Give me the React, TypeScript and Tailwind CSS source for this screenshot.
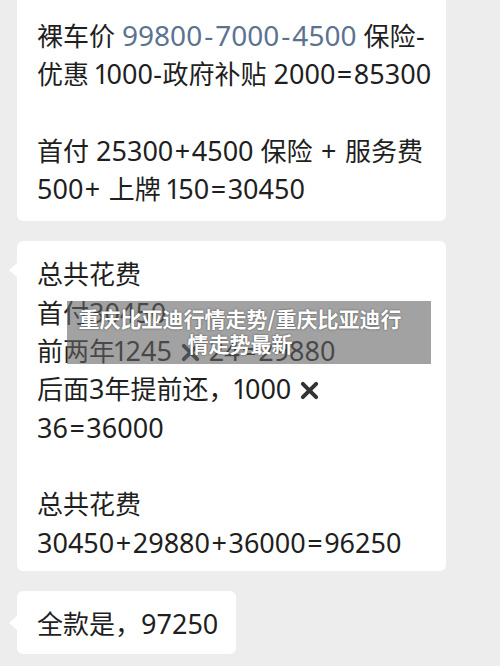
import React from "react";

const font = { fontFamily: '"Noto Sans CJK SC", "Noto Sans", sans-serif' };

// latin runs use Noto Sans digits, with a narrow "1" and roomier symbols like the phone font
function T({ children, wide }: { children: string; wide?: boolean }) {
  const parts = children.split(/([0-9+=\-]+| )/);
  return (
    <>
      {parts.map((p, i) => {
        if (p === " ") return <span key={i} className="inline-block w-[7px]" />;
        if (/^[0-9+=\-]+$/.test(p))
          return (
            <span key={i} className={wide ? "font-['Noto_Sans'] text-[28px]" : "font-['Noto_Sans'] text-[27px]"}>
              {p.split("").map((q, j) => {
                if (q === "-")
                  return (
                    <span key={j} className={wide ? "mx-[2px]" : "mx-[0.5px]"}>
                      -
                    </span>
                  );
                if (q === "+" || q === "=")
                  return (
                    <span key={j} className="mx-[1.5px]">
                      {q}
                    </span>
                  );
                if (q === "1" && !wide)
                  return (
                    <span key={j} className="mx-[-2.5px]">
                      1
                    </span>
                  );
                return q;
              })}
            </span>
          );
        return <span key={i}>{p}</span>;
      })}
    </>
  );
}

function Cross() {
  return (
    <svg viewBox="0 0 20 20" className="mx-[9px] inline-block h-[19px] w-[19px] align-[-1px]">
      <path d="M3 3 L17 17 M17 3 L3 17" stroke="#333" strokeWidth="4.2" strokeLinecap="round" />
    </svg>
  );
}

function Tail({ top }: { top: number }) {
  return (
    <span
      className="absolute left-[-8px] h-0 w-0 border-y-[7px] border-r-[8px] border-y-transparent border-r-white"
      style={{ top }}
    />
  );
}

export default function App() {
  return (
    <div
      className="relative h-[666px] w-[500px] overflow-hidden bg-[#ecedec] text-[26px] leading-[38.3px] text-[#1f1f1f]"
      style={font}
    >
      <div className="flex flex-col gap-[20px] pl-[17px]">
        <div className="w-[429px] rounded-b-[6px] bg-white pt-[16px] pb-[14px] pl-[20px]">
          <div className="h-[38.3px] whitespace-nowrap">
            <T>裸车价 </T>
            <span className="text-[#5b7391]">
              <T wide>99800-7000-4500</T>
            </span>
            <T> 保险-</T>
          </div>
          <div className="h-[38.3px] whitespace-nowrap">
            <T>优惠 1000-政府补贴 2000=85300</T>
          </div>
          <div className="h-[38.3px]" />
          <div className="h-[38.3px] whitespace-nowrap">
            <T>首付 25300+4500 保险 + 服务费</T>
          </div>
          <div className="h-[38.3px] whitespace-nowrap">
            <T>500+ 上牌 150=30450</T>
          </div>
        </div>

        <div className="relative w-[429px] rounded-[6px] bg-white pt-[13px] pb-[10px] pl-[20px]">
          <Tail top={22} />
          <div className="h-[38.3px]">总共花费</div>
          <div className="h-[38.3px]">
            <T>首付30450</T>
          </div>
          <div className="h-[38.3px] whitespace-nowrap">
            <T>前两年1245</T>
            <Cross />
            <T>24=29880</T>
          </div>
          <div className="h-[38.3px] whitespace-nowrap">
            <T>后面3年提前还，1000</T>
            <Cross />
          </div>
          <div className="h-[38.3px]">
            <T>36=36000</T>
          </div>
          <div className="h-[38.3px]" />
          <div className="h-[38.3px]">总共花费</div>
          <div className="h-[38.3px] whitespace-nowrap">
            <T>30450+29880+36000=96250</T>
          </div>
        </div>

        <div className="relative w-[219px] rounded-[6px] bg-white pt-[13px] pb-[12px] pl-[20px]">
          <Tail top={25} />
          <div className="h-[38.3px]">
            <T>全款是，97250</T>
          </div>
        </div>
      </div>

      <div className="absolute left-[67px] top-[301px] flex h-[63px] w-[364px] flex-col items-center justify-center bg-[rgba(100,100,100,0.6)] pr-[18px] pb-[4px] text-[21px] leading-[25px] font-bold text-white [text-shadow:0_0_2px_rgba(0,0,0,0.6)]">
        <div>重庆比亚迪行情走势/重庆比亚迪行</div>
        <div>情走势最新</div>
      </div>
    </div>
  );
}
